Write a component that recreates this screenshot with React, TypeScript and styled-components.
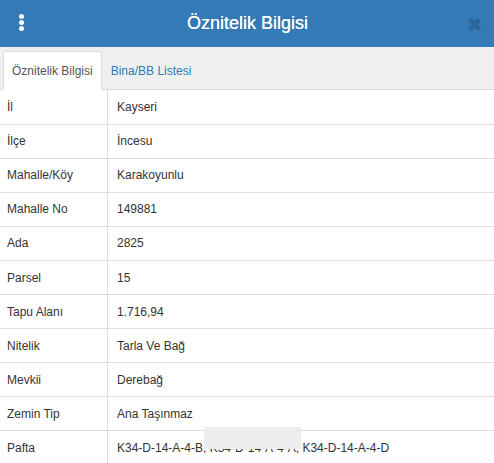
import React from 'react'
import styled, { createGlobalStyle } from 'styled-components'

const GlobalStyle = createGlobalStyle`
  html, body {
    margin: 0;
    padding: 0;
    background: #fff;
    font-family: "Liberation Sans", Arial, sans-serif;
    overflow: hidden;
  }
`

const Panel = styled.div`
  width: 494px;
  height: 463px;
  overflow: hidden;
  position: relative;
  background: #fff;
`

const Header = styled.div`
  height: 47px;
  background: #337ab7;
  display: flex;
  align-items: center;
  justify-content: space-between;
  padding: 0 12px 0 16px;
  color: #fff;
`

const Title = styled.div`
  font-size: 18px;
  flex: 1;
  text-align: center;
  margin-left: 2px;
  text-shadow: 0 0 0.4px #fff;
`

const MenuDots = styled.div`
  width: 10px;
  display: flex;
  flex-direction: column;
  align-items: center;
  gap: 1px;
  margin-top: -3px;

  span {
    width: 5px;
    height: 5px;
    border-radius: 50%;
    background: #fff;
  }
`

const CloseBtn = styled.div`
  color: #2a5f8f;
  font-size: 18px;
  font-weight: bold;
  opacity: 0.7;
  margin-top: 2px;
`

const TabBar = styled.div`
  height: 43px;
  background: #efefef;
  border-bottom: 1px solid #ddd;
  display: flex;
  align-items: flex-end;
  padding-left: 3px;
  box-sizing: border-box;
`

const Tab = styled.div<{ $active?: boolean }>`
  height: ${p => (p.$active ? '39px' : '38px')};
  padding: 0 8px;
  display: flex;
  align-items: center;
  font-size: 12px;
  box-sizing: border-box;
  margin-bottom: -1px;
  color: ${p => (p.$active ? '#555' : '#337ab7')};
  background: ${p => (p.$active ? '#fff' : 'transparent')};
  border: 1px solid ${p => (p.$active ? '#ddd' : 'transparent')};
  border-bottom-color: ${p => (p.$active ? '#fff' : 'transparent')};
  border-radius: 3px 3px 0 0;
`

const Table = styled.table`
  width: 100%;
  border-collapse: collapse;
  font-size: 12px;
  color: #333;
`

const Row = styled.tr`
  height: 34.1px;
  border-bottom: 1px solid #ddd;
`

const Label = styled.td`
  width: 100px;
  padding: 0 0 0 7px;
  border-right: 1px solid #ddd;
`

const Value = styled.td`
  padding: 0 0 0 9px;
`

const Cover = styled.div`
  position: absolute;
  left: 204px;
  top: 427px;
  width: 97px;
  height: 22px;
  background: #ededed;
`

const rows: [string, string][] = [
  ['İl', 'Kayseri'],
  ['İlçe', 'İncesu'],
  ['Mahalle/Köy', 'Karakoyunlu'],
  ['Mahalle No', '149881'],
  ['Ada', '2825'],
  ['Parsel', '15'],
  ['Tapu Alanı', '1.716,94'],
  ['Nitelik', 'Tarla Ve Bağ'],
  ['Mevkii', 'Derebağ'],
  ['Zemin Tip', 'Ana Taşınmaz'],
  ['Pafta', 'K34-D-14-A-4-B, K34-D-14-A-4-A, K34-D-14-A-4-D'],
]

const App = () => {
  return (
    <Panel>
      <GlobalStyle />
      <Header>
        <MenuDots>
          <span />
          <span />
          <span />
        </MenuDots>
        <Title>Öznitelik Bilgisi</Title>
        <CloseBtn>✖</CloseBtn>
      </Header>
      <TabBar>
        <Tab $active>Öznitelik Bilgisi</Tab>
        <Tab>Bina/BB Listesi</Tab>
      </TabBar>
      <Table>
        <tbody>
          {rows.map(([label, value]) => (
            <Row key={label}>
              <Label>{label}</Label>
              <Value>{value}</Value>
            </Row>
          ))}
        </tbody>
      </Table>
      <Cover />
    </Panel>
  )
}

export default App
